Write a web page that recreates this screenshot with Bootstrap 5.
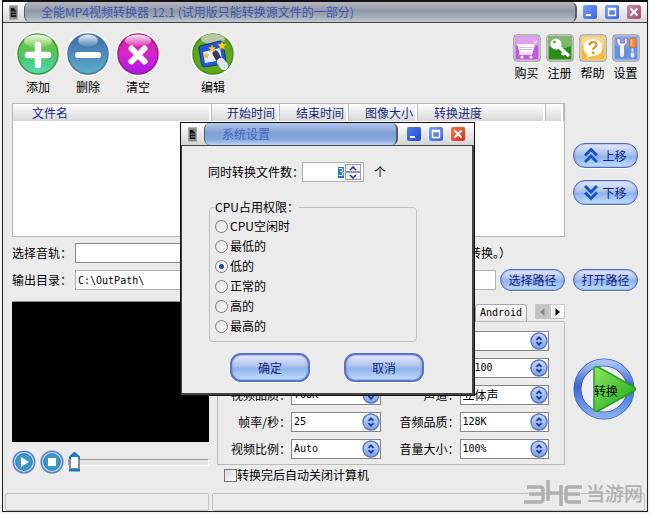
<!DOCTYPE html>
<html lang="zh-CN">
<head>
<meta charset="utf-8">
<meta name="viewport" content="width=device-width, initial-scale=1">
<title>全能MP4视频转换器 12.1</title>
<link href="https://cdn.jsdelivr.net/npm/bootstrap@5.3.0/dist/css/bootstrap.min.css" rel="stylesheet">
<style>
  body { font: 12px/16px "Noto Sans CJK SC", sans-serif; color: #000; background: #f4f4f4; }
  button, input, select { font: inherit; color: inherit; }
  .mono { font-family: "DejaVu Sans Mono", "Noto Sans CJK SC", monospace; font-size: 10px; }
  .win { margin: 0 2px 2px; border: 1px solid #222; border-top: 2px solid #111; background: #ebebeb; min-height: calc(100vh - 2px); }

  .titlebar { height: 21px; border-bottom: 1px solid #444; background: linear-gradient(#fff, #d4d4d4); }
  .sysicon { width: 21px; }
  .caption { border: 1px solid #555c68; border-width: 0 2px 0 1px; border-radius: 6px; padding-left: 16px; color: #3d55b0; background: linear-gradient(#b4b8c0, #8f97a5 45%, #a4acb8 75%, #c4c9d0); }
  .winbtns { width: 70px; gap: 8px; }
  .winbtn { width: 14px; height: 14px; border: 0; border-radius: 2px; background: linear-gradient(135deg, #4f7ef0, #1c49d0); }
  .winbtn.soft { background: linear-gradient(135deg, #7ba0f4, #3a63dc); }
  .winbtn.close-main { background: linear-gradient(135deg, #cf88a8, #a94670); }
  .winbtn.close-dlg { background: linear-gradient(135deg, #f07a5c, #d02e14); }

  .toolbar { height: 80px; padding: 8px 5px 0 10px; }
  .tool, .tool-sm { border: 0; padding: 0; background: none; text-align: center; }
  .tool { width: 50px; }
  .tool svg { width: 46px; height: 46px; margin-bottom: 2px; }
  .tool-sm { width: 33px; padding-top: 3px; }
  .tool-sm svg { width: 28px; height: 28px; margin-bottom: 3px; }
  .tool-gap { margin-left: 25px; }

  .main { padding: 0 9px; }
  .side { width: 65px; flex: none; }
  .filelist { height: 134px; border: 1px solid #b5b5b5; background: #fff; }
  .filelist table { table-layout: fixed; width: 100%; color: #15297c; line-height: 17px; }
  .filelist thead { background: linear-gradient(#fdfdfd, #d8d8d8); }
  .filelist th { font-weight: 400; padding: 0; text-align: right; border-right: 1px solid #bdbdbd; box-shadow: inset -2px 0 #fff; white-space: nowrap; }
  .filelist th:first-child { text-align: left; padding-left: 19px; }
  .pill { border: 1px solid #5268b8; border-radius: 12px; padding: 0; color: #12257c; background: linear-gradient(#e4eafa, #b4c6ee 40%, #8fb4ee 55%, #bfe0fc); box-shadow: inset 0 0 2px #5a74c8, 0 1px #fff; white-space: nowrap; }
  .pill-move { height: 25px; }
  .pill-path { height: 22px; width: 65px; flex: none; }
  .form-line { padding-top: 6px; }
  .lbl { width: 63px; flex: none; white-space: nowrap; }
  .field { border: 1px solid #b0b0b0; border-radius: 0; background: #fff; height: 20px; padding: 0 2px; min-width: 0; }
  .field-dark { border-color: #8a8a8a; }
  .track-note { width: 143px; flex: none; text-align: right; white-space: nowrap; margin-right: 127px; }

  .lower { padding-top: 10px; }
  .player { width: 197px; flex: none; }
  .screen { height: 141px; background: #000; border-top: 1px solid #888; }
  .round { width: 24px; height: 24px; border: 0; padding: 0; background: none; display: flex; }
  .seek { appearance: none; height: 20px; background: none; flex: 1; min-width: 0; margin: 0; }
  .seek::-webkit-slider-runnable-track { height: 7px; border: 1px solid #a8a8a8; border-color: #999 #fff #fff #aaa; background: #e4e4e4; }
  .seek::-webkit-slider-thumb { appearance: none; width: 11px; height: 20px; margin-top: -8px; background: linear-gradient(#fff, #fff) 2px 5px / 7px 11px no-repeat, linear-gradient(#1b7bd8 35%, #8a8a8a 35% 84%, #1478d8 84%); clip-path: polygon(50% 0, 100% 25%, 100% 100%, 0 100%, 0 25%); }

  .tabs { height: 20px; padding-top: 3px; }
  .tab { border: 1px solid #a5a5a5; border-bottom: 0; border-radius: 4px 4px 0 0; background: linear-gradient(#fff, #e8e8e8); padding: 0 4px; width: 52px; height: 17px; }
  .tabnav { width: 15px; height: 15px; border: 1px solid #c8c8c8; padding: 0; display: flex; align-items: center; justify-content: center; background: #f8f8f8; }
  .tabnav:disabled { background: #c4c4c4; }
  .panel { border: 1px solid #bcbcbc; padding: 9px 15px 5px 5px; }
  .settings { display: grid; grid-template-columns: 68px 1fr 79px 1fr; row-gap: 7px; align-items: center; }
  .settings label { text-align: right; white-space: nowrap; }
  .combo { display: flex; align-items: center; height: 20px; border: 1px solid #858585; background: #fff; }
  .combo select { appearance: none; border: 0; background: none; flex: 1; min-width: 0; padding: 0 2px; height: 18px; outline: 0; }
  .combo svg { width: 18px; height: 18px; pointer-events: none; flex: none; }
  .combo .cjk { font: 12px/16px "Noto Sans CJK SC", sans-serif; }
  .tick { appearance: none; width: 13px; height: 13px; border: 1px solid #777; background: linear-gradient(135deg, #d8d8d8, #fff); margin: 0; }
  .below { padding: 2px 0 0 7px; }
  .go { width: 65px; height: 64px; border: 0; background: none; padding: 0; margin-top: 56px; position: relative; }
  .go span { position: absolute; left: 21px; top: 26px; }

  .status { padding: 6px 2px 0; gap: 3px; }
  .cell { height: 18px; border: 1px solid #c2c2c2; border-radius: 2px; }
  .cell-l { width: 204px; }
  .brand { position: absolute; right: 4px; bottom: 5px; color: #b0b0b0; font: 500 19px/24px "Noto Sans CJK SC", sans-serif; }

  .dlg { position: absolute; left: 180px; top: 122px; width: 295px; border: 1px solid #111; background: #ebebeb; box-shadow: inset 0 0 0 1px #fff; }
  .dlg .titlebar { height: 23px; }
  .dlg .sysicon { width: 23px; }
  .dlg .winbtns { width: 76px; }
  .dlg .caption { color: #4864bc; background: linear-gradient(#b5c8ee, #7f9fd6 45%, #86a8de 75%, #b8d4f6); padding-left: 17px; }
  .dlgbody { border: solid #444; border-width: 0 2px 2px 1px; padding: 16px 25px 11px 26px; }
  .spin { width: 62px; margin: 0 10px 0 -2px; }
  .spin input { border: 0; padding: 0 1px; flex: 1; min-width: 0; height: 17px; outline: 0; text-align: right; background: none; }
  .spin input::selection { background: #1b78d7; color: #fff; }
  .spin button { width: 16px; height: 8px; border: 1px solid #999; padding: 0; background: #eee; display: flex; justify-content: center; align-items: center; }
  .group { border: 1px solid #c0c0c0; border-radius: 4px; margin: 16px 30px 0 1px; padding: 0 5px 5px; }
  .group legend { font-size: 12px; line-height: 18px; width: auto; float: none; margin: 0; padding: 0; }
  .opt { height: 20px; gap: 2px; }
  .dot { appearance: none; width: 13px; height: 13px; border: 1px solid #7c7c7c; border-radius: 50%; margin: 0; background: linear-gradient(135deg, #ddd, #fff); }
  .dot:checked { background: radial-gradient(circle, #2540a8 0 2px, #f4f4f4 3px); }
  .actions { padding: 11px 23px 0 22px; }
  .pill-lg { width: 80px; height: 29px; border: 2px solid #5b72c6; border-radius: 11px; }
</style>
</head>
<body>
<svg class="position-absolute" width="0" height="0">
  <defs>
    <linearGradient id="gBlue" x1="0" y1="0" x2="0" y2="1"><stop offset="0" stop-color="#c8daf8"/><stop offset="1" stop-color="#7aa2e6"/></linearGradient>
    <linearGradient id="gGreen" x1="0" y1="0" x2="0" y2="1"><stop offset="0" stop-color="#7cc72a"/><stop offset=".6" stop-color="#4cc46c"/><stop offset="1" stop-color="#58dcc0"/></linearGradient>
    <linearGradient id="gSteel" x1="0" y1="0" x2="0" y2="1"><stop offset="0" stop-color="#3e68a8"/><stop offset="1" stop-color="#5fb0cc"/></linearGradient>
    <linearGradient id="gPink" x1="0" y1="0" x2="0" y2="1"><stop offset="0" stop-color="#d81c94"/><stop offset=".5" stop-color="#d428cc"/><stop offset="1" stop-color="#a818e8"/></linearGradient>
    <linearGradient id="gShine" x1="0" y1="0" x2="0" y2="1"><stop offset="0" stop-color="#fff" stop-opacity=".9"/><stop offset="1" stop-color="#fff" stop-opacity=".1"/></linearGradient>
    <linearGradient id="gPlay" x1="0" y1="0" x2="1" y2="1"><stop offset="0" stop-color="#8ce85c"/><stop offset="1" stop-color="#18a818"/></linearGradient>
    <linearGradient id="gRing" x1="0" y1="0" x2="0" y2="1"><stop offset="0" stop-color="#a8c4f4"/><stop offset=".45" stop-color="#3468d4"/><stop offset="1" stop-color="#88acf0"/></linearGradient>
  </defs>
  <symbol id="updown" viewBox="0 0 18 18"><circle cx="9" cy="9" r="8" fill="url(#gBlue)" stroke="#5c74c4" stroke-width="1.4"/><path d="M6.500 7.800l2.500-2.500 2.500 2.500M6.500 10.200l2.500 2.500 2.500-2.500" fill="none" stroke="#1c3a9c" stroke-width="1.700"/></symbol>
  <symbol id="film" viewBox="0 0 10 16"><rect x=".5" y=".5" width="9" height="15" fill="#888" stroke="#aaa"/><path d="M2 3h3l3 3v7H2z" fill="#16161e"/><path d="M2 7.500h6M3 10.500h5" stroke="#999"/></symbol>
  <symbol id="min" viewBox="0 0 14 14"><path d="M3 10h5" stroke="#fff" stroke-width="2"/></symbol>
  <symbol id="max" viewBox="0 0 14 14"><path d="M3.500 3.500h7v7h-7zM3 4.500h8" fill="none" stroke="#fff" stroke-width="1.400"/></symbol>
  <symbol id="cls" viewBox="0 0 14 14"><path d="M3.500 3.500l7 7M10.500 3.500l-7 7" stroke="#fff" stroke-width="2"/></symbol>
</svg>

<div class="win d-flex flex-column position-relative">
  <header class="titlebar d-flex">
    <div class="sysicon d-flex align-items-center justify-content-center"><svg width="9" height="15"><use href="#film"/></svg></div>
    <div class="caption flex-grow-1 d-flex align-items-center text-nowrap">全能MP4视频转换器 12.1 (试用版只能转换源文件的一部分)</div>
    <div class="winbtns d-flex align-items-center justify-content-center">
      <button class="winbtn d-flex p-0 soft" aria-label="最小化"><svg width="14" height="14"><use href="#min"/></svg></button>
      <button class="winbtn d-flex p-0 soft" aria-label="最大化"><svg width="14" height="14"><use href="#max"/></svg></button>
      <button class="winbtn d-flex p-0 close-main" aria-label="关闭"><svg width="14" height="14"><use href="#cls"/></svg></button>
    </div>
  </header>

  <nav class="toolbar d-flex justify-content-between align-items-start">
    <div class="d-flex">
      <button class="tool"><svg viewBox="0 0 46 46"><circle cx="23" cy="23" r="22.500" fill="#fafafa"/><circle cx="23" cy="23" r="20" fill="url(#gGreen)" stroke="#3f9a38" stroke-width="1.500"/><ellipse cx="23" cy="10" rx="14" ry="6.500" fill="url(#gShine)"/><path d="M23 14v20M13 24h20" stroke="#fff" stroke-width="6.500" stroke-linecap="round"/></svg><span class="d-block">添加</span></button>
      <button class="tool"><svg viewBox="0 0 46 46"><circle cx="23" cy="23" r="22.500" fill="#fafafa"/><circle cx="23" cy="23" r="20" fill="url(#gSteel)" stroke="#4878a4" stroke-width="1.500"/><ellipse cx="23" cy="9.500" rx="10" ry="6" fill="url(#gShine)"/><path d="M13 24h20" stroke="#fff" stroke-width="6" stroke-linecap="round"/></svg><span class="d-block">删除</span></button>
      <button class="tool"><svg viewBox="0 0 46 46"><circle cx="23" cy="23" r="22.500" fill="#fafafa"/><circle cx="23" cy="23" r="20" fill="url(#gPink)" stroke="#a0188c" stroke-width="1.500"/><ellipse cx="23" cy="9.500" rx="13" ry="6" fill="url(#gShine)"/><path d="M16.500 17.500l13 13M29.500 17.500l-13 13" stroke="#fff" stroke-width="6" stroke-linecap="round"/></svg><span class="d-block">清空</span></button>
      <button class="tool tool-gap"><svg viewBox="0 0 46 46"><circle cx="23" cy="23" r="22.500" fill="#fafafa"/><circle cx="23" cy="23" r="20" fill="#5ea81c" stroke="#48901c" stroke-width="1.500"/><ellipse cx="23" cy="8" rx="12" ry="5" fill="#b8c8a4"/><path d="M10 15l20-5q3-.5 3 2l3 18q0 3-3 3l-19 3q-2 0-2.500-3L9 18q-.5-2 1-3z" fill="#2458d0" stroke="#10348c"/><path d="M13 21l17-4 2 12-17 3z" fill="#e4f0fc"/><path d="M25.500 22.500l4.500 8" stroke="#333c5c" stroke-width="6" stroke-linecap="round"/><path d="M31 31l3 4" stroke="#dce8f8" stroke-width="8" stroke-linecap="round"/><g fill="#ffcc1c" stroke="#e89810" stroke-width=".4"><path d="M32 10l1.300 3 3.200.3-2.400 2.100.8 3.200-2.900-1.700-2.900 1.700.8-3.200-2.400-2.100 3.200-.3z"/><path d="M22 14l1 2.300 2.600.3-2 1.600.7 2.600-2.300-1.400-2.300 1.400.7-2.600-2-1.600 2.600-.3z"/><path d="M16 22l.8 1.800 2 .2-1.500 1.300.5 2-1.800-1.100-1.800 1.100.5-2-1.500-1.300 2-.2z"/></g></svg><span class="d-block">编辑</span></button>
    </div>
    <div class="d-flex">
      <button class="tool-sm"><svg viewBox="0 0 28 28"><rect x=".8" y=".8" width="26.400" height="26.400" rx="3" fill="#d8d0dc" stroke="#999"/><rect x="2.500" y="2.500" width="23" height="23" fill="#c05cdc"/><path d="M3 3h22v8q-11 5-22 0z" fill="#dca4ec"/><path d="M24 7l-2 1-3.500 12H6M5 11l2 7h12l2-7zM6 14.500h14M6 12.500h15M7 16.500h12" fill="none" stroke="#fff" stroke-width="1.300"/><circle cx="9" cy="23" r="1.500" fill="#fff"/><circle cx="18" cy="23" r="1.500" fill="#fff"/></svg><span class="d-block">购买</span></button>
      <button class="tool-sm"><svg viewBox="0 0 28 28"><rect x=".8" y=".8" width="26.400" height="26.400" rx="3" fill="#d0dccc" stroke="#999"/><rect x="2.500" y="2.500" width="23" height="23" fill="#2c8c18"/><path d="M3 3h22v9q-11 5-22 1z" fill="#7cb868"/><circle cx="10" cy="10" r="5.500" fill="#fff"/><circle cx="8.500" cy="8" r="1.400" fill="#5ca044"/><path d="M12 12l11 10M18 18l-1.500 3" stroke="#fff" stroke-width="3.500"/></svg><span class="d-block">注册</span></button>
      <button class="tool-sm"><svg viewBox="0 0 28 28"><rect x=".8" y=".8" width="26.400" height="26.400" rx="3" fill="#e8dcc0" stroke="#999"/><rect x="2.500" y="2.500" width="23" height="23" fill="#f4bc38"/><path d="M3 3h22v8q-11 5-22 0z" fill="#f8d888"/><path d="M14 5c6 0 9.500 4 9.500 8.500S20 22 13 22l-6 2 2-3.500C6 19 4.500 16 4.500 13.500 4.500 9 8 5 14 5z" fill="#fff"/><path d="M10.500 11.500c0-4.500 7-4.500 7-.7 0 2.500-3.500 2.500-3.500 5" fill="none" stroke="#e09c18" stroke-width="2.300"/><circle cx="14" cy="18.800" r="1.500" fill="#e09c18"/></svg><span class="d-block">帮助</span></button>
      <button class="tool-sm"><svg viewBox="0 0 28 28"><rect x=".8" y=".8" width="26.400" height="26.400" rx="3" fill="#ccd0e0" stroke="#999"/><rect x="2.500" y="2.500" width="23" height="23" fill="#5c94ec"/><path d="M3 3h22v8q-11 5-22 0z" fill="#8c98f4"/><path d="M5 4v5l2.500 3v8c0 5 5 5 5 0v-8L15 9V4l-2.500 1v4h-4V5z" fill="#eee" stroke="#777" stroke-width=".7"/><path d="M20.500 13v6" stroke="#ddd" stroke-width="2"/><rect x="17.500" y="4" width="6.500" height="10" rx="2.500" fill="#f48c28" stroke="#b85810" stroke-width=".6"/><path d="M19.500 5.500v6" stroke="#ffd8a0" stroke-width="1.500"/><ellipse cx="20.500" cy="21" rx="2.200" ry="3" fill="#e8e8e8" stroke="#888" stroke-width=".6"/></svg><span class="d-block">设置</span></button>
    </div>
  </nav>

  <main class="main flex-grow-1">
    <div class="d-flex">
      <div class="filelist flex-grow-1">
        <table>
          <colgroup><col><col style="width:68px"><col style="width:69px"><col style="width:69px"><col style="width:128px"><col style="width:18px"></colgroup>
          <thead><tr><th>文件名</th><th class="pe-1">开始时间</th><th class="pe-1">结束时间</th><th class="pe-1">图像大小</th><th class="text-start ps-3">转换进度</th><th></th></tr></thead>
        </table>
      </div>
      <div class="side ms-2 pt-2 d-flex flex-column justify-content-center gap-2">
        <button class="pill pill-move d-flex align-items-center justify-content-center gap-1"><svg width="14" height="17" viewBox="0 0 14 17"><path d="M1 8.500l6-6 6 6M1 15l6-6 6 6" fill="none" stroke="#1454c8" stroke-width="3"/></svg>上移</button>
        <button class="pill pill-move mt-1 d-flex align-items-center justify-content-center gap-1"><svg width="14" height="17" viewBox="0 0 14 17"><path d="M1 2l6 6 6-6M1 8.500l6 6 6-6" fill="none" stroke="#1454c8" stroke-width="3"/></svg>下移</button>
      </div>
    </div>

    <div class="form-line d-flex align-items-center">
      <label class="lbl" for="audio">选择音轨：</label>
      <input id="audio" class="field field-dark flex-grow-1" type="text">
      <span class="track-note">转换。）</span>
    </div>
    <div class="form-line d-flex align-items-center">
      <label class="lbl" for="out">输出目录：</label>
      <input id="out" class="field mono flex-grow-1" type="text" value="C:\OutPath\">
      <button class="pill pill-path ms-1">选择路径</button>
      <button class="pill pill-path ms-2">打开路径</button>
    </div>

    <div class="lower d-flex">
      <section class="player">
        <div class="screen"></div>
        <div class="d-flex align-items-center pt-2">
          <button class="round" aria-label="播放"><svg viewBox="0 0 24 24"><circle cx="12" cy="12" r="10.800" fill="#c8e0f4" stroke="#5c84c0" stroke-width="1.500"/><circle cx="12" cy="12" r="8.300" fill="#3c98cc" stroke="#2c70b0"/><path d="M9 7l8 5-8 5z" fill="#fff"/></svg></button>
          <button class="round ms-1" aria-label="停止"><svg viewBox="0 0 24 24"><circle cx="12" cy="12" r="10.800" fill="#c8e0f4" stroke="#5c84c0" stroke-width="1.500"/><circle cx="12" cy="12" r="8.300" fill="#3c98cc" stroke="#2c70b0"/><path d="M8 8h8v8H8z" fill="#fff"/></svg></button>
          <input class="seek ms-1" type="range" value="0" aria-label="播放进度">
        </div>
      </section>
      <section class="flex-grow-1 ms-2">
        <div class="tabs d-flex justify-content-end">
          <button class="tab mono">Android</button>
          <div class="d-flex ms-2">
            <button class="tabnav" disabled aria-label="向左"><svg width="5" height="8"><path d="M4.500 0v8L0 4z" fill="#888"/></svg></button>
            <button class="tabnav" aria-label="向右"><svg width="5" height="8"><path d="M.5 0v8L5 4z"/></svg></button>
          </div>
        </div>
        <div class="panel">
          <div class="settings">
            <span></span><div class="combo"><select class="mono" aria-label="视频选项一"><option></option></select><svg><use href="#updown"/></svg></div>
            <span></span><div class="combo"><select class="mono" aria-label="音频选项一"><option></option></select><svg><use href="#updown"/></svg></div>
            <span></span><div class="combo"><select class="mono" aria-label="视频选项二"><option></option></select><svg><use href="#updown"/></svg></div>
            <span></span><div class="combo"><select class="mono" aria-label="音频采样率"><option>44100</option></select><svg><use href="#updown"/></svg></div>
            <label for="vq">视频品质：</label><div class="combo"><select id="vq" class="mono"><option>768K</option></select><svg><use href="#updown"/></svg></div>
            <label for="ch">声道：</label><div class="combo"><select id="ch" class="cjk"><option>立体声</option></select><svg><use href="#updown"/></svg></div>
            <label for="fps">帧率/秒：</label><div class="combo"><select id="fps" class="mono"><option>25</option></select><svg><use href="#updown"/></svg></div>
            <label for="aq">音频品质：</label><div class="combo"><select id="aq" class="mono"><option>128K</option></select><svg><use href="#updown"/></svg></div>
            <label for="ratio">视频比例：</label><div class="combo"><select id="ratio" class="mono"><option>Auto</option></select><svg><use href="#updown"/></svg></div>
            <label for="vol">音量大小：</label><div class="combo"><select id="vol" class="mono"><option>100%</option></select><svg><use href="#updown"/></svg></div>
          </div>
        </div>
        <div class="below d-flex align-items-center">
          <input class="tick" type="checkbox" id="off"><label for="off">转换完后自动关闭计算机</label>
        </div>
      </section>
      <div class="side ms-2">
        <button class="go"><svg width="65" height="64" viewBox="0 0 65 64"><circle cx="31" cy="32" r="26.500" fill="none" stroke="#3c5cb4" stroke-width="8"/><circle cx="31" cy="32" r="26.500" fill="none" stroke="url(#gRing)" stroke-width="6.500"/><circle cx="31" cy="32" r="22" fill="#eeeef6"/><path d="M21 11q1-2 4-1l36 20q3 2 0 4L25 54q-3 1-4-1z" fill="url(#gPlay)" stroke="#2c9c24" stroke-width="1.500"/></svg><span>转换</span></button>
      </div>
    </div>
  </main>

  <footer class="status d-flex">
    <div class="cell cell-l"></div>
    <div class="cell flex-grow-1"></div>
  </footer>
  <div class="brand d-flex align-items-center gap-1"><svg width="58" height="26" viewBox="0 0 58 26"><path d="M3 7h13q3 0 3 3v9q0 3-3 3H0M5 14h13M24 0v21M37 5v21M24 13h13M58 7H45q-3 0-3 3v9q0 3 3 3h12M43 14h13" fill="none" stroke="#b0b0b0" stroke-width="3.500"/></svg>当游网</div>
</div>

<div class="dlg" role="dialog" aria-labelledby="dlgTitle">
  <header class="titlebar d-flex">
    <div class="sysicon d-flex align-items-center justify-content-center"><svg width="9" height="15"><use href="#film"/></svg></div>
    <div class="caption flex-grow-1 d-flex align-items-center" id="dlgTitle">系统设置</div>
    <div class="winbtns d-flex align-items-center justify-content-center">
      <button class="winbtn d-flex p-0" aria-label="最小化"><svg width="14" height="14"><use href="#min"/></svg></button>
      <button class="winbtn d-flex p-0 soft" aria-label="最大化"><svg width="14" height="14"><use href="#max"/></svg></button>
      <button class="winbtn d-flex p-0 close-dlg" aria-label="关闭"><svg width="14" height="14"><use href="#cls"/></svg></button>
    </div>
  </header>
  <div class="dlgbody">
    <div class="d-flex align-items-center">
      <label for="count" class="text-nowrap">同时转换文件数：</label>
      <div class="field spin d-flex align-items-center">
        <input id="count" class="mono" type="text" value="3">
        <div><button aria-label="增加"><svg width="8" height="5"><path d="M1 4l3-3 3 3" fill="none" stroke="#1c3a9c" stroke-width="1.500"/></svg></button><button aria-label="减少"><svg width="8" height="5"><path d="M1 1l3 3 3-3" fill="none" stroke="#1c3a9c" stroke-width="1.500"/></svg></button></div>
      </div>个
    </div>
    <fieldset class="group">
      <legend>CPU占用权限：</legend>
      <div class="opt d-flex align-items-center"><input class="dot" type="radio" name="cpu" id="c1"><label for="c1">CPU空闲时</label></div>
      <div class="opt d-flex align-items-center"><input class="dot" type="radio" name="cpu" id="c2"><label for="c2">最低的</label></div>
      <div class="opt d-flex align-items-center"><input class="dot" type="radio" name="cpu" id="c3" checked><label for="c3">低的</label></div>
      <div class="opt d-flex align-items-center"><input class="dot" type="radio" name="cpu" id="c4"><label for="c4">正常的</label></div>
      <div class="opt d-flex align-items-center"><input class="dot" type="radio" name="cpu" id="c5"><label for="c5">高的</label></div>
      <div class="opt d-flex align-items-center"><input class="dot" type="radio" name="cpu" id="c6"><label for="c6">最高的</label></div>
    </fieldset>
    <div class="actions d-flex justify-content-between">
      <button class="pill pill-lg">确定</button>
      <button class="pill pill-lg">取消</button>
    </div>
  </div>
</div>
<script src="https://cdn.jsdelivr.net/npm/bootstrap@5.3.0/dist/js/bootstrap.bundle.min.js"></script>
<script>
  const count = document.getElementById('count');
  count.focus();
  count.select();
</script>
</body>
</html>
